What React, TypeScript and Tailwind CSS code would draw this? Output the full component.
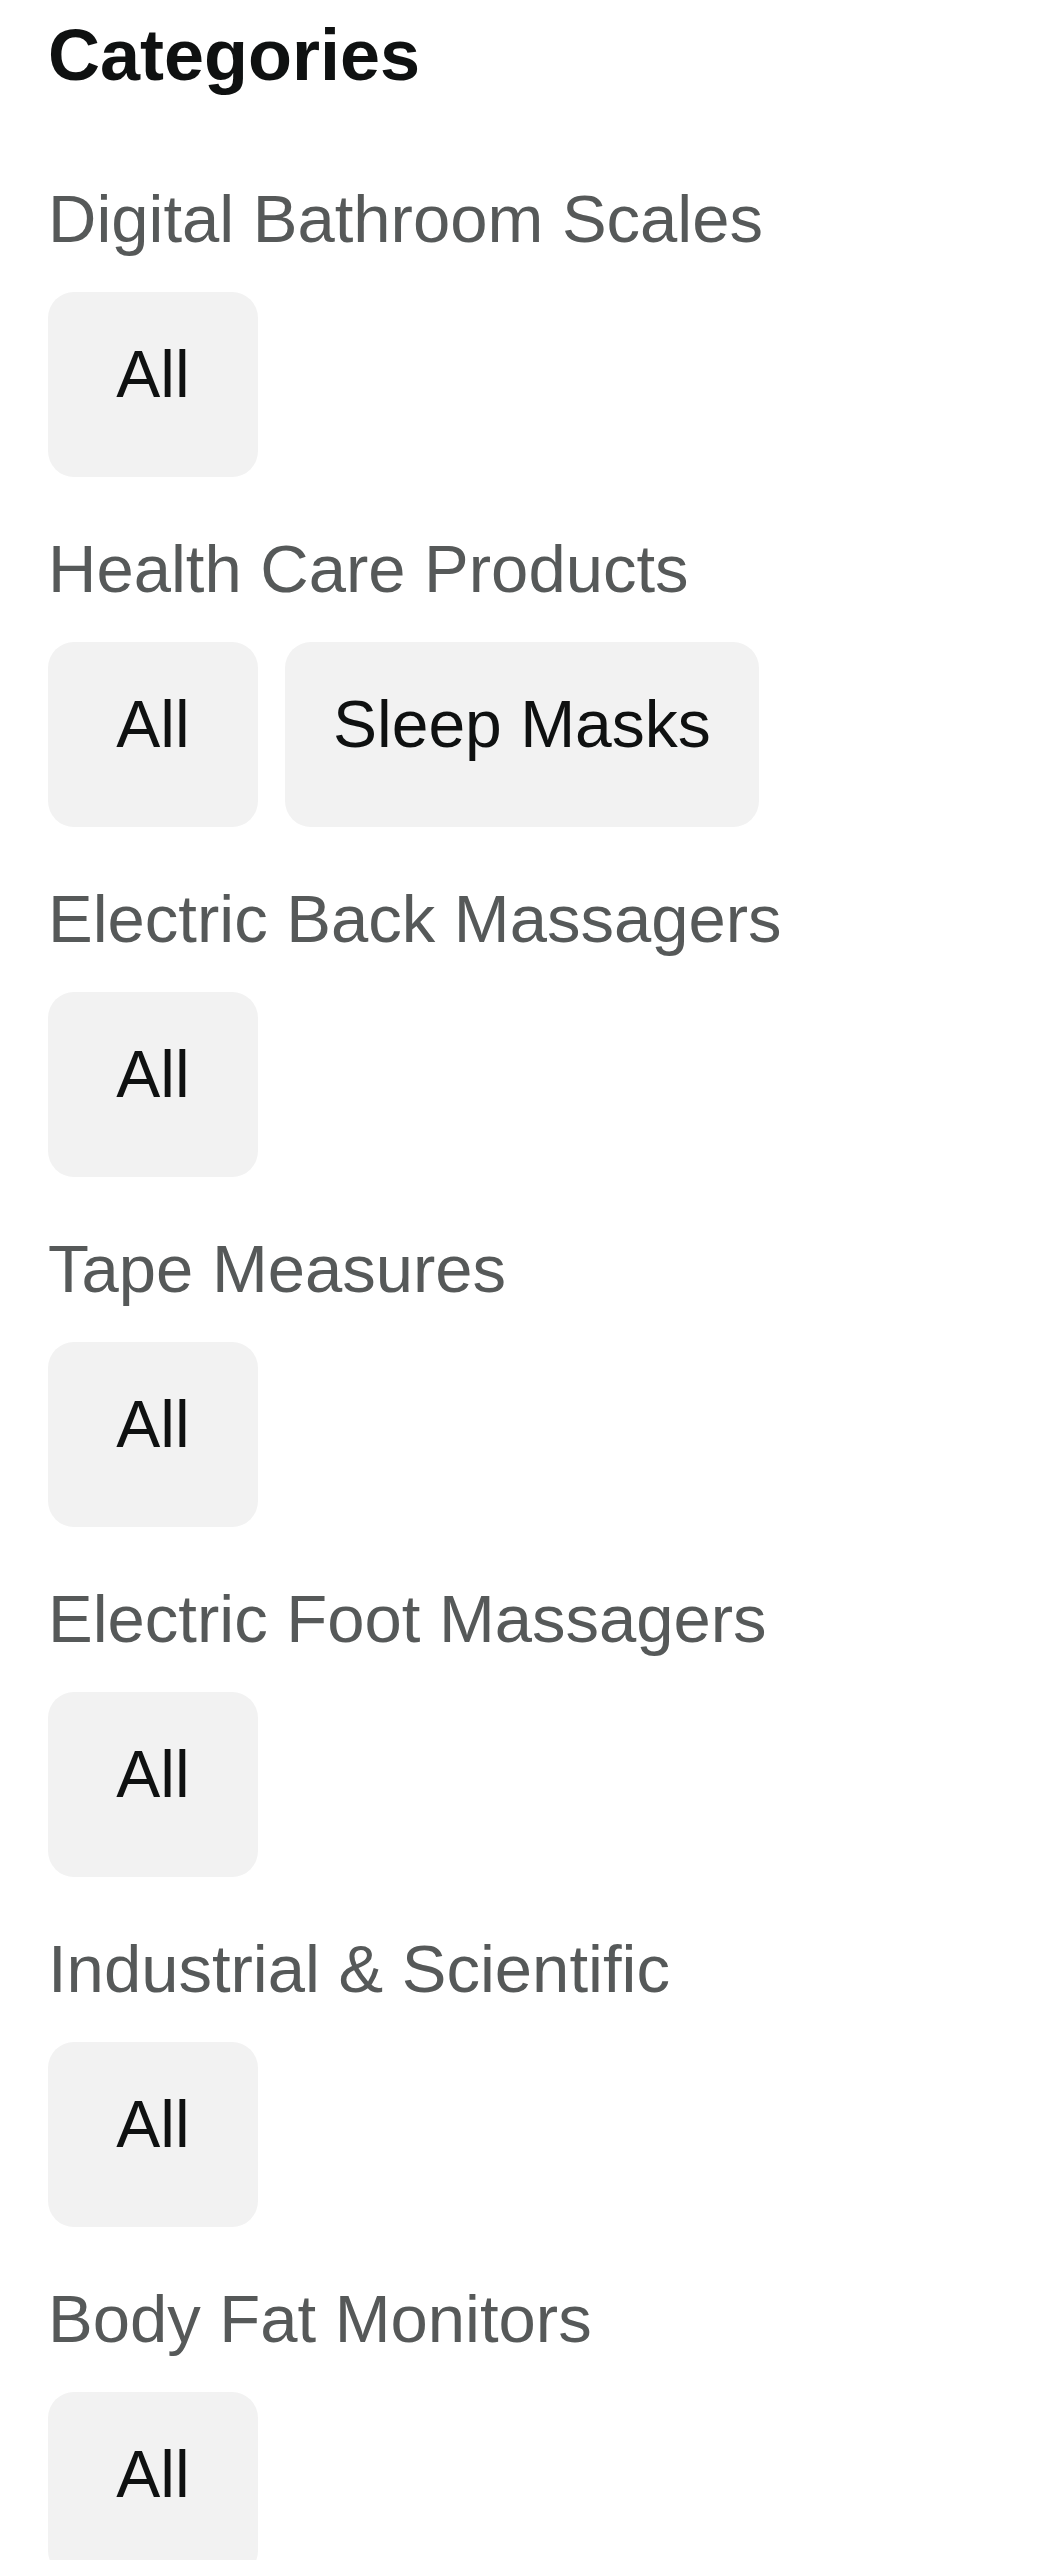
import React from 'react';

const sections: { title: string; chips: string[] }[] = [
  { title: 'Digital Bathroom Scales', chips: ['All'] },
  { title: 'Health Care Products', chips: ['All', 'Sleep Masks'] },
  { title: 'Electric Back Massagers', chips: ['All'] },
  { title: 'Tape Measures', chips: ['All'] },
  { title: 'Electric Foot Massagers', chips: ['All'] },
  { title: 'Industrial & Scientific', chips: ['All'] },
  { title: 'Body Fat Monitors', chips: ['All'] },
];

export default function App() {
  return (
    <div className="min-h-screen bg-white pl-[48px] pt-[12px] font-['Liberation_Sans',Arial,sans-serif]">
      <h2 className="text-[72px] leading-[86px] font-bold text-[#0f1111]">Categories</h2>
      <div className="mt-[80px] flex flex-col gap-[51px]">
        {sections.map((section) => (
          <div key={section.title}>
            <div className="text-[67px] leading-[82px] text-[#565959]">{section.title}</div>
            <div className="mt-[32px] flex gap-[27px]">
              {section.chips.map((chip) => (
                <button
                  key={chip}
                  className="min-w-[210px] h-[185px] px-[48px] pt-[41px] pb-[62px] rounded-[26px] bg-[#f2f2f2] text-[66px] leading-[82px] text-[#0f1111] text-center"
                >
                  {chip}
                </button>
              ))}
            </div>
          </div>
        ))}
      </div>
    </div>
  );
}
